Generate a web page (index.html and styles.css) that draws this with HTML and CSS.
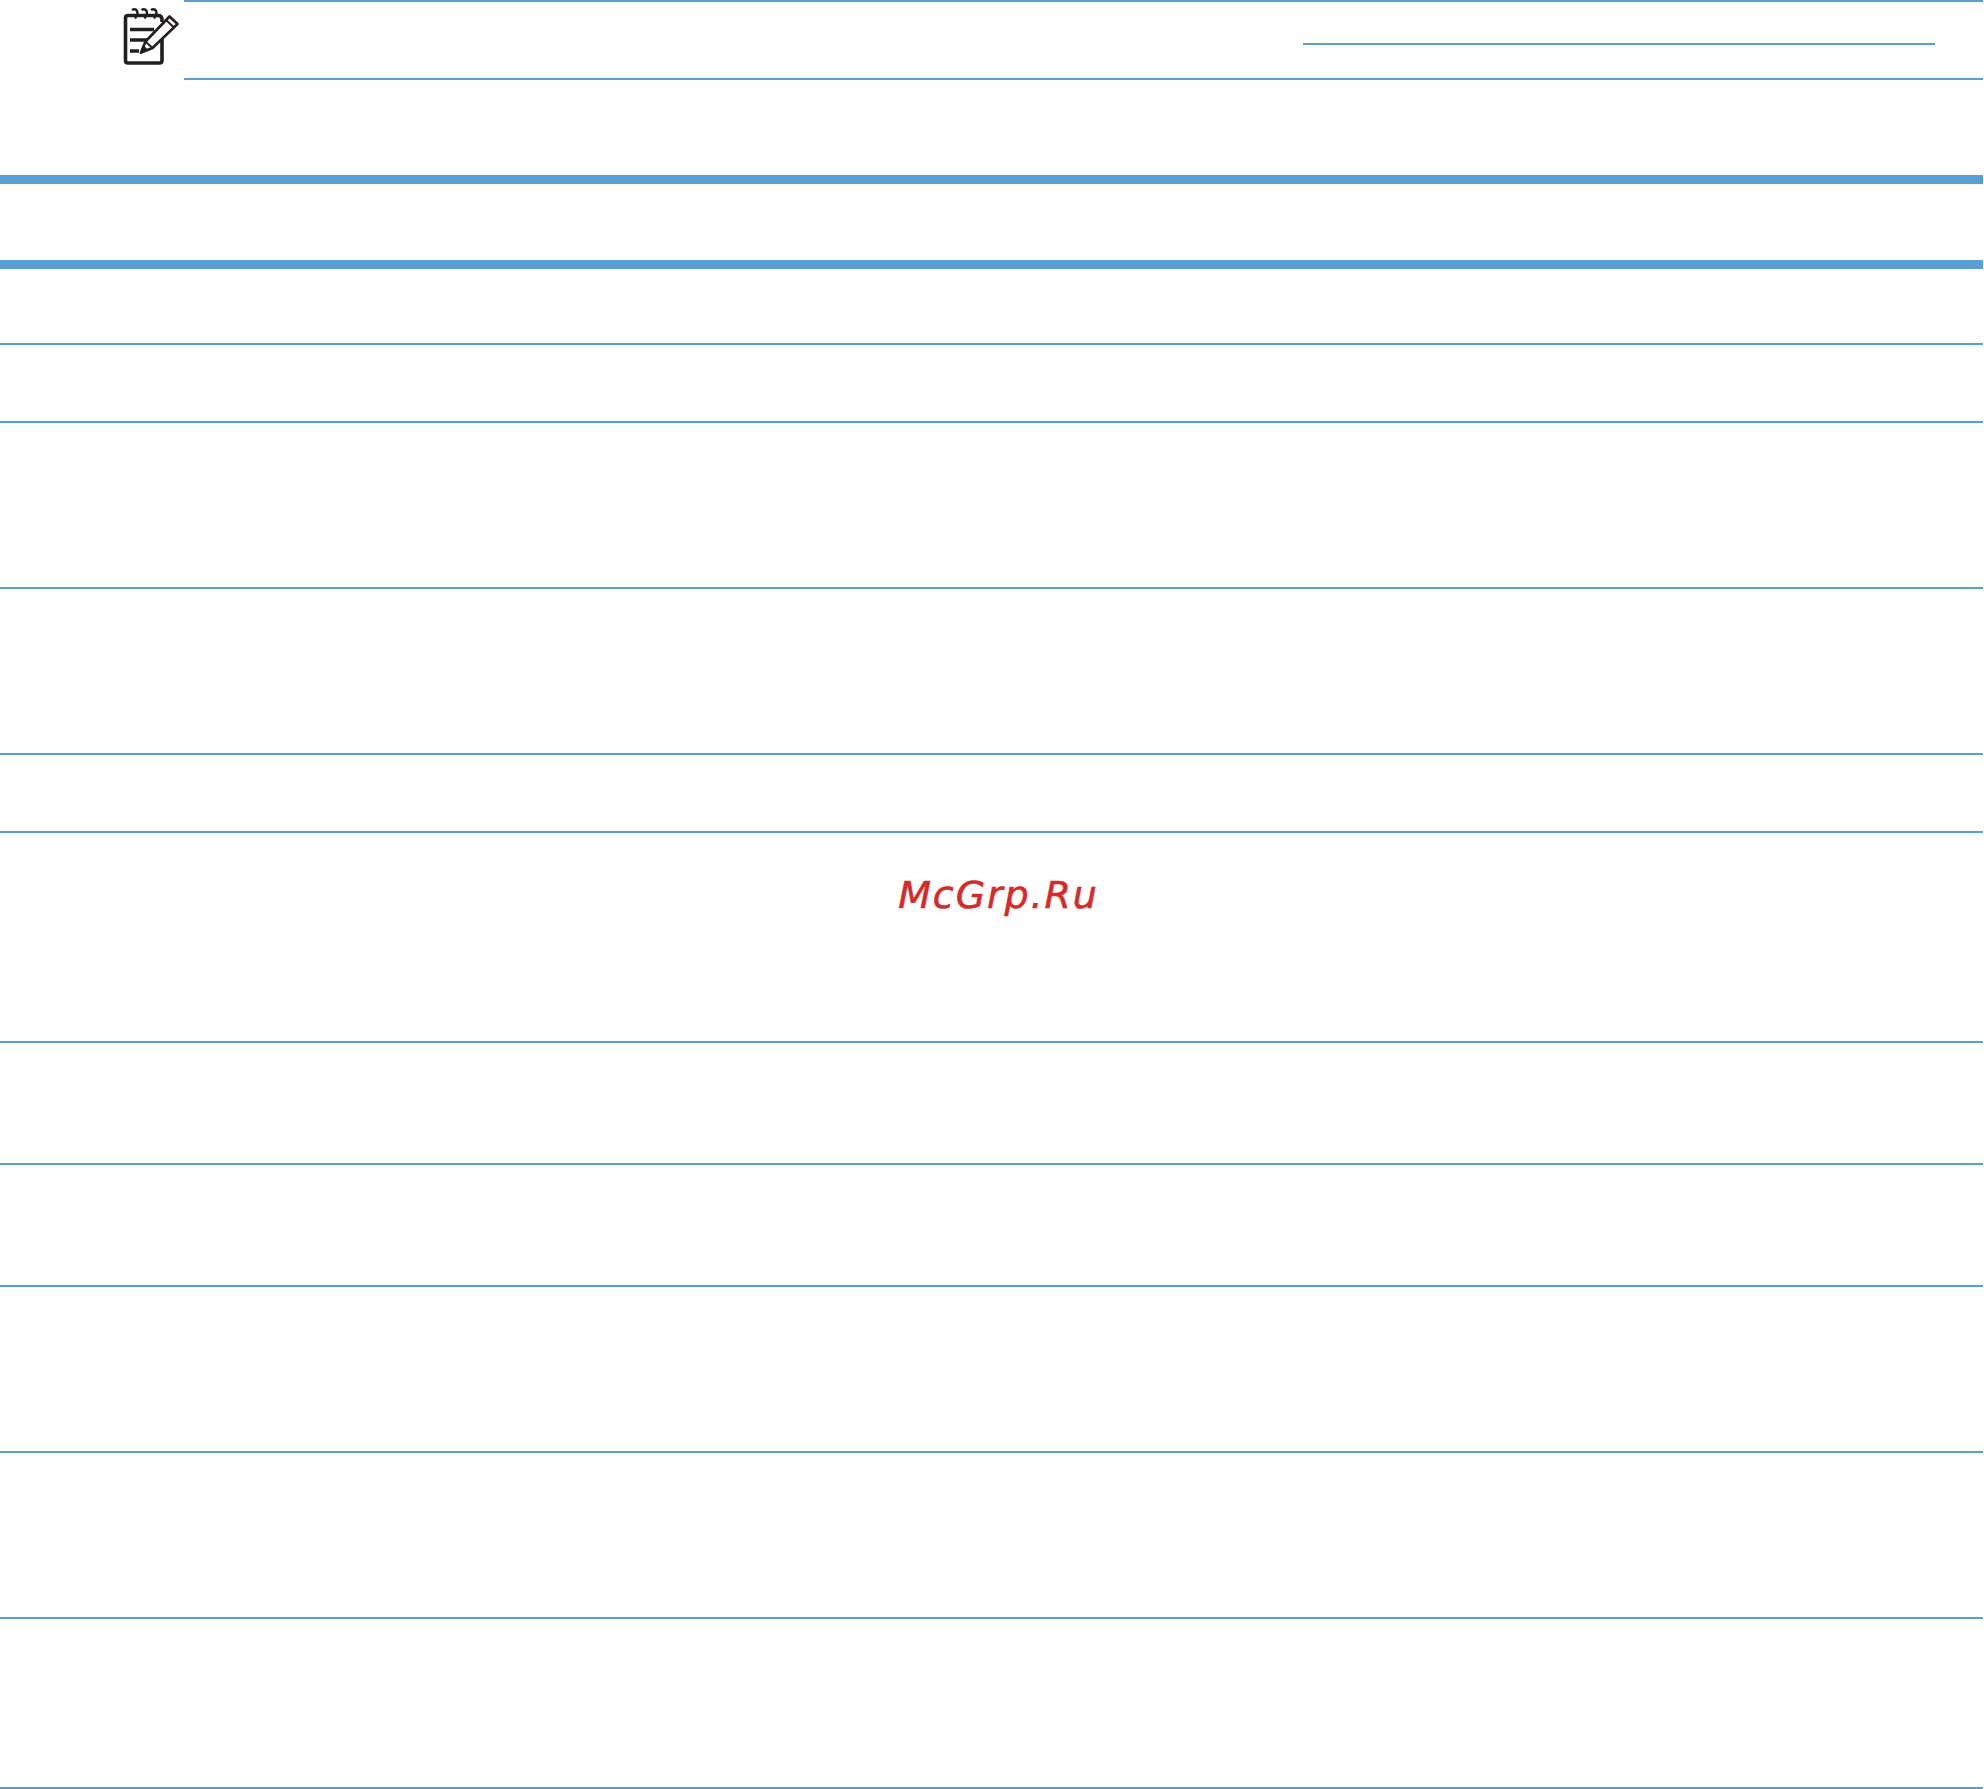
FILE: index.html
```html
<!DOCTYPE html>
<html lang="ru">
<head>
<meta charset="utf-8">
<title>McGrp.Ru</title>
<link rel="stylesheet" href="styles.css">
</head>
<body>
<main class="page">
  <section class="note-row">
    <svg class="note-icon" viewBox="0 0 60 60" aria-hidden="true">
      <path class="ink" d="M10 10.500H8Q5.500 10.500 5.500 13V55.500Q5.500 58 8 58H39.500Q42 58 42 55.500V33"/>
      <path class="ink" d="M10 10.500H38Q42 10.500 42 14.500V17"/>
      <path class="ring" d="M12 5C15 3 17.500 5 17.500 8C17.500 10.500 16.500 12 15 13.500"/>
      <path class="ring" d="M21.500 5C24.500 3 27 5 27 8C27 10.500 26 12 24.500 13.500"/>
      <path class="ring" d="M31 5C34 3 36.500 5 36.500 8C36.500 10.500 35.500 12 34 13.500"/>
      <path class="ink" d="M10 24.500H34M10 35H27M10 46H19"/>
      <path class="pencil" d="M21 47.500L25.500 36.500L49.500 11.500L57.500 19L32.500 43Z"/>
      <path class="ink-thin" d="M46 15L54 22.500M26 37L32.500 43"/>
      <path class="tip" d="M19.500 49L23 40L29 45.500Z"/>
    </svg>
    <div class="note">
      <div class="note-link"></div>
    </div>
  </section>
  <section class="table">
    <div class="row row-head"></div>
    <div class="row row-76"></div>
    <div class="row row-78"></div>
    <div class="row row-166"></div>
    <div class="row row-166"></div>
    <div class="row row-78"></div>
    <div class="row row-210"></div>
    <div class="row row-122"></div>
    <div class="row row-122"></div>
    <div class="row row-166"></div>
    <div class="row row-166"></div>
    <div class="row row-170"></div>
  </section>
  <div class="watermark">McGrp.Ru</div>
</main>
</body>
</html>
```
FILE: styles.css
```css
html, body {
  margin: 0;
  padding: 0;
  background: #fff;
}

.page {
  position: relative;
  width: 1983px;
  height: 1789px;
  overflow: hidden;
}

.note-row {
  display: flex;
  height: 80px;
  padding-left: 120px;
  gap: 4px;
}

.note-icon {
  flex: none;
  width: 60px;
  height: 60px;
  margin-top: 5px;
}

.ink, .ring, .ink-thin, .pencil {
  fill: none;
  stroke: #231f20;
}

.ink {
  stroke-width: 3.6;
}

.ring {
  stroke-width: 2.4;
}

.ink-thin {
  stroke-width: 2;
}

.pencil {
  fill: #fff;
  stroke-width: 2.6;
  stroke-linejoin: round;
}

.tip {
  fill: #231f20;
}

.note {
  flex: 1;
  box-sizing: border-box;
  border-top: 2px solid #5a9fd4;
  border-bottom: 2px solid #5a9fd4;
  padding-top: 41px;
  padding-left: 1119px;
}

.note-link {
  width: 632px;
  height: 2px;
  background: #5a9fd4;
}

.table {
  margin-top: 95px;
}

.row {
  box-sizing: border-box;
  border-bottom: 2px solid #5a9fd4;
}

.row-head {
  height: 94px;
  border-top: 9px solid #5a9fd4;
  border-bottom-width: 9px;
}

.row-76 { height: 76px; }
.row-78 { height: 78px; }
.row-122 { height: 122px; }
.row-166 { height: 166px; }
.row-170 { height: 170px; }
.row-210 { height: 210px; }

.watermark {
  position: absolute;
  left: 14px;
  right: 0;
  top: 872px;
  text-align: center;
  font-family: "DejaVu Sans", sans-serif;
  font-style: italic;
  font-size: 38px;
  line-height: 46px;
  letter-spacing: 1.9px;
  color: #d62a2a;
  -webkit-text-stroke: 0.6px #d62a2a;
}
```
